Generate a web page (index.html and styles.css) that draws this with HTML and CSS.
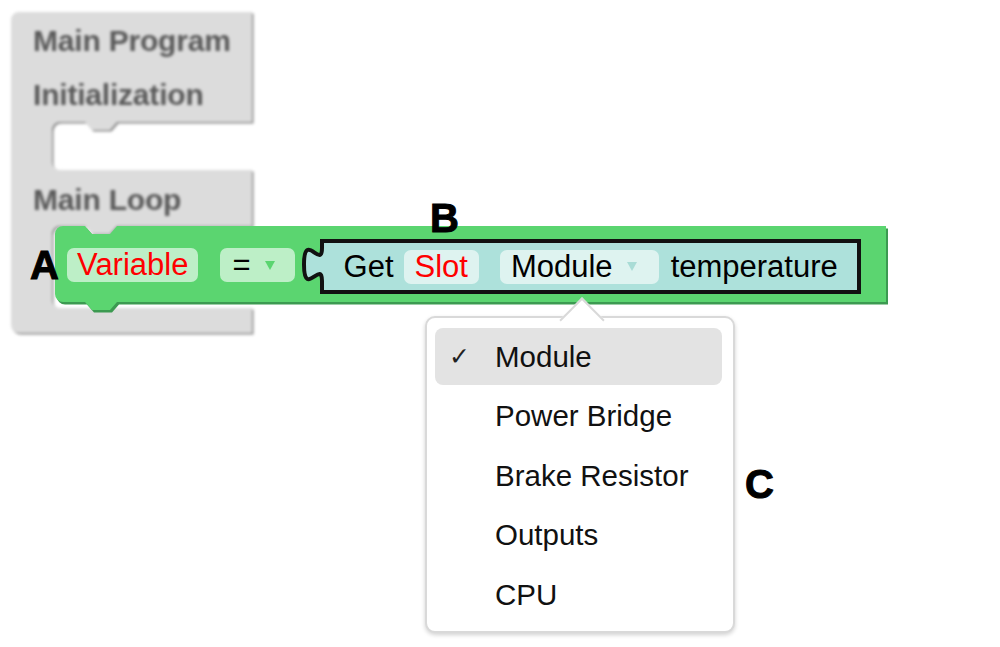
FILE: index.html
```html
<!DOCTYPE html>
<html>
<head>
<meta charset="utf-8">
<link rel="stylesheet" href="styles.css">
</head>
<body>
<div class="canvas">
  <div class="main-block">
    <svg class="main-shape" width="260" height="330" viewBox="0 0 260 330">
      <path class="main-shadow" d="M0,8 a8,8 0 0 1 8,-8 H241 V110 H106 L99,118 H81 L74,110 H49 a8,8 0 0 0 -8,8 V150 a8,8 0 0 0 8,8 H241 V214 H106 L99,222 H81 L74,214 H49 a8,8 0 0 0 -8,8 V288 a8,8 0 0 0 8,8 H241 V321 H8 a8,8 0 0 1 -8,-8 Z"/>
      <path class="main-fill" d="M0,8 a8,8 0 0 1 8,-8 H241 V110 H106 L99,118 H81 L74,110 H49 a8,8 0 0 0 -8,8 V150 a8,8 0 0 0 8,8 H241 V214 H106 L99,222 H81 L74,214 H49 a8,8 0 0 0 -8,8 V288 a8,8 0 0 0 8,8 H241 V321 H8 a8,8 0 0 1 -8,-8 Z"/>
    </svg>
    <div class="main-labels">
      <div class="main-label">Main Program</div>
      <div class="main-label">Initialization</div>
      <div class="main-label loop">Main Loop</div>
    </div>
  </div>

  <div class="set-block">
    <svg class="set-shape" width="831" height="86" viewBox="0 0 831 86">
      <path class="set-shadow" d="M0,8 a8,8 0 0 1 8,-8 H30 l7,8 h18 l7,-8 H831 V76 H62 l-7,8 h-18 l-7,-8 H8 a8,8 0 0 1 -8,-8 Z"/>
      <path class="set-fill" d="M0,8 a8,8 0 0 1 8,-8 H30 l7,8 h18 l7,-8 H831 V76 H62 l-7,8 h-18 l-7,-8 H8 a8,8 0 0 1 -8,-8 Z"/>
    </svg>
    <div class="set-row">
      <span class="pill pill-green var">Variable</span>
      <span class="pill pill-green eq"><span class="eq-sign">=</span><span class="tri tri-green"></span></span>
      <div class="get-block">
        <svg class="tab" width="30" height="34" viewBox="0 0 30 34">
          <path class="tab-fill" d="M24,0 c0,22 -18,-18 -18,16.5 s18,-5.5 18,16.5 L30,33 L30,0 Z"/>
          <path class="tab-stroke" d="M24,-2 V0 c0,22 -18,-18 -18,16.5 s18,-5.5 18,16.5 V35"/>
        </svg>
        <span class="word">Get</span>
        <span class="pill pill-teal slot">Slot</span>
        <span class="pill pill-teal module"><span>Module</span><span class="tri tri-teal"></span></span>
        <span class="word temp">temperature</span>
      </div>
    </div>
  </div>

  <div class="menu">
    <div class="menu-arrow"></div>
    <div class="menu-item selected"><span class="check">✓</span><span>Module</span></div>
    <div class="menu-item"><span class="check"></span><span>Power Bridge</span></div>
    <div class="menu-item"><span class="check"></span><span>Brake Resistor</span></div>
    <div class="menu-item"><span class="check"></span><span>Outputs</span></div>
    <div class="menu-item"><span class="check"></span><span>CPU</span></div>
  </div>

  <span class="tag tag-a">A</span>
  <span class="tag tag-b">B</span>
  <span class="tag tag-c">C</span>
</div>
</body>
</html>
```

FILE: styles.css
```css
html, body {
  margin: 0;
  padding: 0;
  background: #ffffff;
}

.canvas {
  position: relative;
  width: 1000px;
  height: 647px;
  overflow: hidden;
  font-family: "Liberation Sans", Arial, sans-serif;
}

/* grey background block */
.main-block {
  position: absolute;
  left: 11px;
  top: 12px;
  width: 260px;
  height: 330px;
  filter: blur(1.4px);
}

.main-shape {
  position: absolute;
  left: 0;
  top: 0;
  overflow: visible;
}

.main-shadow {
  fill: #8a8a8a;
  transform: translate(1.5px, 1.5px);
}

.main-fill {
  fill: #dcdcdc;
}

.main-labels {
  position: relative;
  display: flex;
  flex-direction: column;
  padding: 2px 0 0 22px;
}

.main-label {
  font-size: 30px;
  font-weight: bold;
  line-height: 54px;
  color: #595959;
  letter-spacing: -0.2px;
}

.main-label.loop {
  margin-top: 51px;
}

/* green set block */
.set-block {
  position: absolute;
  left: 55px;
  top: 226px;
  width: 831px;
  height: 76px;
}

.set-shape {
  position: absolute;
  left: 0;
  top: 0;
  overflow: visible;
}

.set-shadow {
  fill: #3c9a51;
  transform: translate(2px, 2.5px);
}

.set-fill {
  fill: #5bd570;
}

.set-row {
  position: relative;
  display: flex;
  align-items: center;
  height: 76px;
  padding: 2px 0 0 12px;
  box-sizing: border-box;
}

.pill {
  display: inline-flex;
  align-items: center;
  height: 34px;
  border-radius: 7px;
  font-size: 31px;
  line-height: 34px;
  box-sizing: border-box;
}

.pill-green {
  background: #bdefc7;
}

.pill-teal {
  background: #def3f0;
}

.var {
  color: #ff0000;
  padding: 0 10px;
}

.eq {
  margin-left: 22px;
  padding: 0 20px 0 12px;
  color: #000;
}

.tri {
  width: 0;
  height: 0;
  border-left: 5px solid transparent;
  border-right: 5px solid transparent;
  border-top: 9px solid #5bd570;
}

.tri-green {
  margin-left: 14px;
  border-top-color: #5bd570;
}

.tri-teal {
  margin-left: 14px;
  border-top-color: #a9dcd6;
}

.get-block {
  position: relative;
  display: flex;
  align-items: center;
  height: 55px;
  margin-left: 25px;
  padding: 0 19px 0 20px;
  border: 4px solid #111;
  background: #ade1db;
  box-sizing: border-box;
  margin-top: 3px;
}

.tab {
  position: absolute;
  left: -26px;
  top: 5px;
  overflow: visible;
}

.tab-fill {
  fill: #ade1db;
}

.tab-stroke {
  fill: none;
  stroke: #111;
  stroke-width: 4;
  stroke-linejoin: round;
}

.word {
  font-size: 31px;
  color: #000;
}

.slot {
  margin-left: 10px;
  padding: 0 11px;
  color: #ff0000;
}

.module {
  margin-left: 21px;
  padding: 0 22px 0 11px;
  color: #000;
}

.temp {
  margin-left: 12px;
}

/* dropdown menu */
.menu {
  position: absolute;
  left: 425px;
  top: 316px;
  width: 310px;
  height: 317px;
  box-sizing: border-box;
  padding: 10px 11px 0 8px;
  border: 2px solid #d9d9d9;
  border-radius: 10px;
  background: #fff;
  box-shadow: 0 2px 4px rgba(0, 0, 0, 0.18);
  display: flex;
  flex-direction: column;
  gap: 2.5px;
}

.menu-arrow {
  position: absolute;
  left: 139px;
  top: -14px;
  width: 32px;
  height: 32px;
  background: #fff;
  border-top: 2px solid #d9d9d9;
  border-left: 2px solid #d9d9d9;
  box-sizing: border-box;
  transform: rotate(45deg);
}

.menu-item {
  position: relative;
  display: flex;
  align-items: center;
  height: 57px;
  border-radius: 8px;
  font-size: 29.5px;
  color: #111;
}

.menu-item.selected {
  background: #e3e3e3;
}

.check {
  width: 60px;
  padding-left: 14px;
  box-sizing: border-box;
  font-family: "DejaVu Sans", sans-serif;
  font-size: 25px;
  color: #222;
}

/* annotation letters */
.tag {
  position: absolute;
  font-family: "Liberation Sans", Arial, sans-serif;
  font-weight: bold;
  font-size: 40px;
  line-height: 40px;
  color: #000;
  -webkit-text-stroke: 1px #000;
}

.tag-a {
  left: 30px;
  top: 245px;
}

.tag-b {
  left: 430px;
  top: 198px;
}

.tag-c {
  left: 745px;
  top: 464px;
}
```
